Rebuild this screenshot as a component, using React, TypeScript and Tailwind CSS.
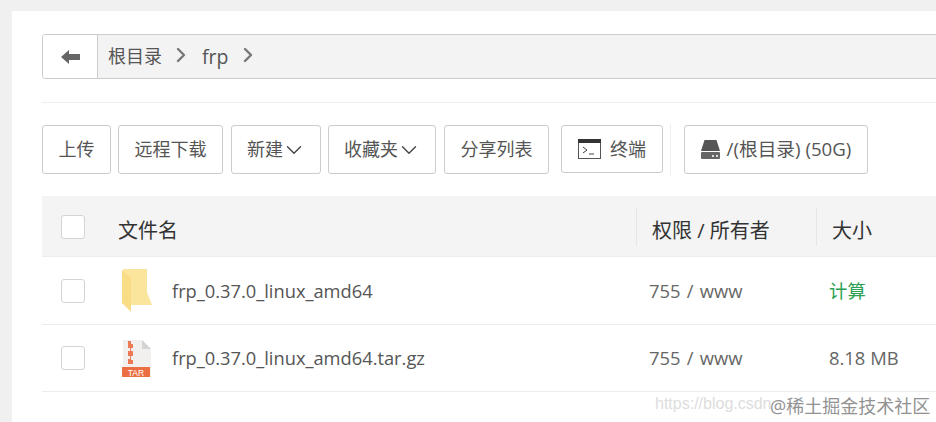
import { ChevronDown, ChevronRight } from 'lucide-react';

const FONT = "font-['Open_Sans','Noto_Sans_CJK_SC',sans-serif]";

function ToolButton({ label, w, caret }: { label: string; w: string; caret?: boolean }) {
  return (
    <button className={`${w} h-[49px] shrink-0 flex items-center justify-center bg-white border border-[#ccc] rounded-[3px] text-[18px] text-[#555] ${caret ? 'pl-[2px]' : ''}`}>
      {label}
      {caret && <ChevronDown size={26} strokeWidth={1.3} className="text-[#444] -ml-[2px]" />}
    </button>
  );
}

function Checkbox({ className = '' }: { className?: string }) {
  return <div className={`w-6 h-6 bg-white border border-[#d4d4d4] rounded-[3px] shrink-0 ${className}`} />;
}

function FolderIcon() {
  return (
    <svg width="30" height="43" viewBox="0 0 30 43">
      <path d="M1 0h24v24l5 12H9L1 26z" fill="#fce7a4" />
      <path d="M1 0h24v24l5 12H9V10z" fill="#fbe59c" />
      <path d="M0 1l9 8v34l-9-9z" fill="#f9dd86" />
    </svg>
  );
}

function TarIcon() {
  return (
    <svg width="30" height="38" viewBox="0 0 30 38" className="mt-[2px]">
      <path d="M1 0h19l9 9v28H1z" fill="#f1f0ee" />
      <path d="M20 0l9 9h-9z" fill="#d4d4d4" />
      <path d="M6 1h3v3h2v4H9v3h2v5H9v4h2v4H6v-5h2v-3H6v-5h2V8H6z" fill="#ec7a55" />
      <rect x="0" y="27" width="28" height="10" fill="#ec6f43" />
      <text x="14" y="35.5" textAnchor="middle" fontSize="8.5" fill="#fff" fontFamily="Liberation Sans">TAR</text>
    </svg>
  );
}

function Row({ name, perm, size, icon, green, h }: { name: string; perm: string; size: string; icon: React.ReactNode; green?: boolean; h: string }) {
  return (
    <div className={`flex items-center ${h} border-b border-[#ececec] text-[18.4px] text-[#666]`}>
      <div className="w-[594px] flex items-center pl-[19px] shrink-0">
        <Checkbox />
        <div className="w-[30px] ml-[37px] flex justify-center shrink-0">{icon}</div>
        <span className="ml-5 text-[#555] text-[18.3px]">{name}</span>
      </div>
      <div className="w-[180px] pl-[13px] shrink-0 [word-spacing:1.5px]">{perm}</div>
      <div className={`pl-[13px] ${green ? 'text-[#2d9f52]' : ''}`}>{size}</div>
    </div>
  );
}

export default function App() {
  return (
    <div className={`${FONT} w-[936px] h-[422px] overflow-hidden bg-[#f0f0f0] pt-[11px] pl-3 relative`}>
      <div className="bg-white h-[411px] pl-[30px] pt-[23px]">
        {/* breadcrumb */}
        <div className="flex h-[45px] -mr-5 border border-[#ccc] rounded-[3px] bg-[#f3f3f3] overflow-hidden">
          <div className="w-[55px] bg-white border-r border-[#ccc] flex items-center justify-center shrink-0">
            <svg width="19" height="14" viewBox="0 0 19 14">
              <path d="M0 7l8-7v4h11v6H8v4z" fill="#666" />
            </svg>
          </div>
          <div className="flex items-center pl-[10px] text-[18px] text-[#555]">
            <span>根目录</span>
            <ChevronRight size={24} strokeWidth={2.4} className="text-[#777] ml-[7px] mr-[9px] -mt-1" />
            <span className="text-[19.5px]">frp</span>
            <ChevronRight size={24} strokeWidth={2.4} className="text-[#777] ml-2 -mt-1" />
          </div>
        </div>

        <div className="mt-[23px] border-t border-[#eee]" />

        {/* toolbar */}
        <div className="flex items-start mt-[22px]">
          <ToolButton label="上传" w="w-[69px]" />
          <div className="w-[7px] shrink-0" />
          <ToolButton label="远程下载" w="w-[105px]" />
          <div className="w-2 shrink-0" />
          <ToolButton label="新建" w="w-[90px]" caret />
          <div className="w-[7px] shrink-0" />
          <ToolButton label="收藏夹" w="w-[108px]" caret />
          <div className="w-2 shrink-0" />
          <ToolButton label="分享列表" w="w-[105px]" />
          <button className="w-[102px] h-[48px] ml-3 shrink-0 flex items-center justify-center gap-[9px] bg-white border border-[#ccc] rounded-[3px] text-[18px] text-[#555]">
            <svg width="23" height="20" viewBox="0 0 23 20">
              <rect x="0.5" y="0.5" width="22" height="19" fill="#fff" stroke="#555" />
              <rect x="0" y="0" width="23" height="4" fill="#333" />
              <path d="M5 8l4 3-4 3" fill="none" stroke="#444" />
              <path d="M11 15h5" stroke="#444" />
            </svg>
            终端
          </button>
          <div className="w-px h-[52px] bg-[#eee] ml-[7px] -mt-[1px] shrink-0" />
          <button className="w-[184px] h-[49px] ml-[13px] shrink-0 flex items-center justify-center gap-[7px] bg-white border border-[#ccc] rounded-[3px] text-[18.7px] text-[#555]">
            <svg width="19" height="19" viewBox="0 0 19 19">
              <path d="M3.5 0h12L19 11H0z" fill="#555" />
              <path d="M1 12h17a1 1 0 0 1 1 1v5a1 1 0 0 1-1 1H1a1 1 0 0 1-1-1v-5a1 1 0 0 1 1-1z" fill="#666" />
              <rect x="11" y="15" width="2" height="2" fill="#ddd" />
              <rect x="15" y="15" width="2" height="2" fill="#ddd" />
            </svg>
            /(根目录) (50G)
          </button>
        </div>

        {/* table */}
        <div className="mt-5">
          <div className="flex items-center h-[61px] bg-[#f4f4f4] border-b border-[#ececec] text-[20px] text-[#333]">
            <div className="w-[594px] h-full flex items-center pl-[19px] shrink-0">
              <Checkbox className="mt-[2px]" />
              <span className="ml-[33px] mt-[9px]">文件名</span>
            </div>
            <div className="w-[180px] shrink-0 pl-[15px] h-[38px] mt-[2px] border-l border-[#e6e6e6] flex items-center">
              <span className="mt-[8px]">权限 / 所有者</span>
            </div>
            <div className="pl-[15px] h-[38px] mt-[2px] border-l border-[#e6e6e6] flex items-center">
              <span className="mt-[8px]">大小</span>
            </div>
          </div>
          <Row name="frp_0.37.0_linux_amd64" perm="755 / www" size="计算" green icon={<FolderIcon />} h="h-[68px]" />
          <Row name="frp_0.37.0_linux_amd64.tar.gz" perm="755 / www" size="8.18 MB" icon={<TarIcon />} h="h-[67px]" />
        </div>
      </div>

      {/* watermarks */}
      <div className="absolute left-[655px] top-[394px] text-[16px] text-[#ddd] font-['Liberation_Sans',sans-serif] leading-5 whitespace-nowrap">
        https://blog.csdn
      </div>
      <div className="absolute left-[770px] top-[394px] text-[18px] text-[#777] leading-6 whitespace-nowrap opacity-80">
        @稀土掘金技术社区
      </div>
    </div>
  );
}
